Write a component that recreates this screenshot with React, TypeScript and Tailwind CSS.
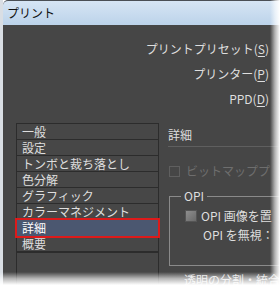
import React from 'react';

const menu = [
  '一般',
  '設定',
  'トンボと裁ち落とし',
  '色分解',
  'グラフィック',
  'カラーマネジメント',
  '詳細',
  '概要',
];

function Label({ text, keyChar }: { text: string; keyChar: string }) {
  return (
    <div className="h-[25px] flex items-center whitespace-nowrap">
      {text}(<span className="underline underline-offset-2">{keyChar}</span>)
    </div>
  );
}

export default function App() {
  return (
    <div className="w-[280px] h-[285px] bg-white relative overflow-hidden font-['Noto_Sans_CJK_JP','Noto_Sans',sans-serif] text-[12px] leading-[14px]">
      <div className="h-full flex flex-col border-l-[3px] border-[#d9dee4]">
        {/* title bar */}
        <div className="h-[25px] shrink-0 flex items-center pl-[4px] bg-linear-to-b from-[#d6e5f4] to-[#bcd3ea] border-t border-[#4a4f55] rounded-tl-[5px] text-[#111]">
          プリント
        </div>

        {/* body */}
        <div className="flex-1 flex flex-col bg-[#464646] text-[#dedede] pt-[11px] min-h-0">
          <div className="flex flex-col items-end pr-[11px]">
            <Label text="プリントプリセット" keyChar="S" />
            <Label text="プリンター" keyChar="P" />
            <Label text="PPD" keyChar="D" />
          </div>

          <div className="flex-1 flex mt-[12px] min-h-0">
            {/* category list */}
            <div className="ml-[13px] w-[143px] border border-[#2c2c2c] bg-[#474747] flex flex-col">
              {menu.map((item, i) => (
                <div
                  key={item}
                  className={
                    i === 6
                      ? 'h-[16px] shrink-0 flex items-center pl-[5px] bg-[#4b5770] text-white outline-2 outline-[#dd1a1a] relative z-10'
                      : 'h-[16px] shrink-0 flex items-center pl-[5px] border-b border-[#2c2c2c]'
                  }
                >
                  {item}
                </div>
              ))}
              <div className="h-[1px] bg-[#2c2c2c]" />
            </div>

            {/* detail panel */}
            <div className="ml-[9px] flex-1 flex flex-col min-w-0">
              <div className="h-[24px] shrink-0 flex items-center border-b border-[#5f5f5f] mr-[-20px]">
                詳細
              </div>

              <div className="mt-[17px] h-[14px] flex items-center gap-[6px] text-[#6e6e6e] whitespace-nowrap">
                <div className="w-[11px] h-[11px] shrink-0 ml-[1px] border border-[#5f5f5f]" />
                ビットマッププ
              </div>

              <fieldset className="mt-[11px] ml-[1px] w-[180px] border border-[#8a8a8a] pb-[23px]">
                <legend className="ml-[11px] px-[3px] leading-[14px]">OPI</legend>
                <div className="pt-[6px] pl-[15px] h-[20px] flex items-center gap-[4px] whitespace-nowrap">
                  <div className="w-[12px] h-[12px] shrink-0 border border-[#555] bg-linear-to-br from-[#8e8e8e] to-[#6a6a6a]" />
                  OPI 画像を置
                </div>
                <div className="mt-[5px] pl-[33px] h-[14px] flex items-center whitespace-nowrap">
                  OPI を無視：
                </div>
              </fieldset>

              <div className="mt-[7px] pl-[16px] whitespace-nowrap">透明の分割・統合</div>
            </div>
          </div>
        </div>
      </div>

      {/* window shadow fades */}
      <div className="absolute top-0 right-0 h-full w-[10px] bg-linear-to-r from-transparent via-white/60 to-white" />
      <div className="absolute bottom-0 left-0 w-full h-[13px] bg-linear-to-b from-transparent via-white/60 to-white" />
    </div>
  );
}
